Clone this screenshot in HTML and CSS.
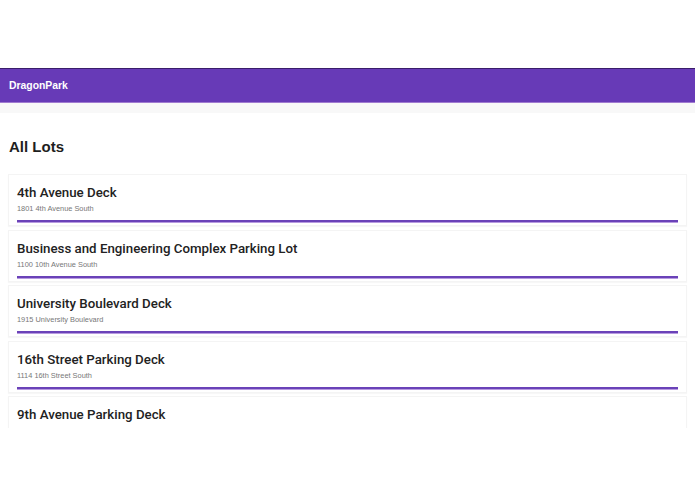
FILE: index.html
```html
<!DOCTYPE html>
<html>
<head>
<meta charset="utf-8">
<link rel="stylesheet" href="styles.css">
</head>
<body>
<div class="top-space"></div>
<header class="navbar"><span class="brand">DragonPark</span></header>
<div class="subbar"></div>
<main class="content">
  <h1 class="page-title">All Lots</h1>
  <div class="lot-list">
    <div class="lot-card">
      <div class="lot-name">4th Avenue Deck</div>
      <div class="lot-address">1801 4th Avenue South</div>
      <div class="lot-bar"></div>
    </div>
    <div class="lot-card">
      <div class="lot-name">Business and Engineering Complex Parking Lot</div>
      <div class="lot-address">1100 10th Avenue South</div>
      <div class="lot-bar"></div>
    </div>
    <div class="lot-card">
      <div class="lot-name">University Boulevard Deck</div>
      <div class="lot-address">1915 University Boulevard</div>
      <div class="lot-bar"></div>
    </div>
    <div class="lot-card">
      <div class="lot-name">16th Street Parking Deck</div>
      <div class="lot-address">1114 16th Street South</div>
      <div class="lot-bar"></div>
    </div>
    <div class="lot-card">
      <div class="lot-name">9th Avenue Parking Deck</div>
      <div class="lot-address">907 9th Street South</div>
      <div class="lot-bar"></div>
    </div>
  </div>
</main>
</body>
</html>
```

FILE: styles.css
```css
* { box-sizing: border-box; }
html, body { margin: 0; padding: 0; background: #fff; }
body {
  font-family: "Liberation Sans", Arial, sans-serif;
  color: #222;
  width: 695px;
  height: 494px;
  overflow: hidden;
}
.top-space { height: 68px; }
.navbar {
  height: 35px;
  background: #673ab7;
  border-top: 1px solid #3a1d6b;
  border-bottom: 1px solid #a07ad0;
  display: flex;
  align-items: center;
  padding-left: 9px;
}
.brand {
  color: #fff;
  font-weight: 700;
  font-size: 10.4px;
}
.subbar { height: 10px; background: #f8f8f8; }
.content {
  height: 315px;
  overflow: hidden;
  padding: 0 8px 0 8px;
}
.page-title {
  margin: 0;
  padding-top: 26px;
  padding-left: 1px;
  font-size: 15px;
  line-height: 16px;
  font-weight: 700;
  color: #1e1e1e;
  height: 61px;
}
.lot-list { display: flex; flex-direction: column; gap: 3.5px; }
.lot-card {
  border: 1px solid #f4f4f4;
  box-shadow: 0 1px 1px rgba(0,0,0,0.03);
  padding: 10px 8px 4px 8px;
  height: 52px;
}
.lot-name {
  font-family: Roboto, "Liberation Sans", Arial, sans-serif;
  font-size: 13.3px;
  font-weight: 500;
  color: #222;
  line-height: 16px;
}
.lot-address {
  font-size: 7.4px;
  color: #777;
  line-height: 10px;
  margin-top: 3px;
}
.lot-bar {
  margin-top: 6px;
  height: 2px;
  background: #6a42b8;
  box-shadow: 0 1px 0 #b79ae0;
}
```
